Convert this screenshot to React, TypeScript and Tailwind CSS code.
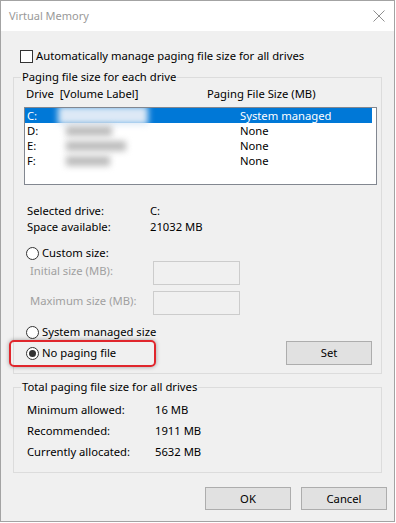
import React from "react";

function Radio({ checked }: { checked?: boolean }) {
  return (
    <span className="w-[13px] h-[13px] rounded-full border border-[#333333] bg-white flex items-center justify-center shrink-0">
      {checked && <span className="w-[7px] h-[7px] rounded-full bg-[#333333]" />}
    </span>
  );
}

function Btn({ label, h }: { label: string; h: string }) {
  return (
    <div className={`w-[86px] ${h} bg-[#e1e1e1] border border-[#adadad] flex items-center justify-center text-black`}>
      {label}
    </div>
  );
}

const rows = [
  { d: "C:", v: "System managed", sel: true, blob: "w-[90px]" },
  { d: "D:", v: "None", sel: false, blob: "w-[46px]" },
  { d: "E:", v: "None", sel: false, blob: "w-[60px]" },
  { d: "F:", v: "None", sel: false, blob: "w-[44px]" },
];

export default function App() {
  return (
    <div className="w-[396px] h-[523px] bg-white font-['Noto_Sans',sans-serif] text-[11.25px] leading-[16px] text-black">
      <div className="w-[395px] h-[522px] border border-[#a3a3a3] bg-[#f0f0f0] flex flex-col">
        {/* Title bar */}
        <div className="h-[30px] bg-white flex items-center justify-between shrink-0">
          <span className="pl-[8px] text-[#999999] text-[11px]">Virtual Memory</span>
          <svg width="12" height="12" viewBox="0 0 12 12" className="mr-[9px]">
            <line x1="0.5" y1="0.5" x2="11.5" y2="11.5" stroke="#8f8f8f" strokeWidth="1" />
            <line x1="11.5" y1="0.5" x2="0.5" y2="11.5" stroke="#8f8f8f" strokeWidth="1" />
          </svg>
        </div>

        {/* Checkbox */}
        <div className="mt-[17px] ml-[19px] h-[16px] flex items-center gap-[3px]">
          <span className="w-[13px] h-[13px] border border-[#333333] bg-white shrink-0" />
          <span>Automatically manage paging file size for all drives</span>
        </div>

        {/* Group 1 */}
        <fieldset className="mt-[5px] ml-[12px] w-[369px] border border-[#dcdcdc] pb-[8px]">
          <legend className="ml-[7px] px-[1px] leading-[16px]">Paging file size for each drive</legend>
          <div className="mt-[1px] h-[16px] flex">
            <span className="ml-[12px] w-[181px] whitespace-pre">Drive  [Volume Label]</span>
            <span>Paging File Size (MB)</span>
          </div>
          <div className="mt-[5px] ml-[10px] w-[353px] h-[78px] border border-[#828790] bg-white overflow-hidden">
            {rows.map((r) => (
              <div
                key={r.d}
                className={`w-[347px] h-[15px] flex items-center ${r.sel ? "bg-[#0078d7] text-white" : ""}`}
              >
                <span className="w-[33px] pl-[2px] shrink-0">{r.d}</span>
                <span className="w-[182px] shrink-0 flex items-center">
                  {r.sel ? (
                    <span className="w-[90px] h-[19px] bg-[#dde9f6] blur-[3px]" />
                  ) : (
                    <span className={`ml-[8px] ${r.blob} h-[10px] bg-[#bdbdbd] blur-[3px]`} />
                  )}
                </span>
                <span>{r.v}</span>
              </div>
            ))}
          </div>

          <div className="mt-[18px] pl-[13px] h-[16px] flex">
            <span className="w-[123px]">Selected drive:</span>
            <span>C:</span>
          </div>
          <div className="pl-[13px] h-[16px] flex">
            <span className="w-[123px]">Space available:</span>
            <span>21032 MB</span>
          </div>

          <div className="mt-[10px] ml-[12px] h-[16px] flex items-center gap-[3px]">
            <Radio />
            <span>Custom size:</span>
          </div>
          <div className="h-[24px] flex items-start">
            <span className="w-[139px] pl-[16px] pt-[2px] text-[#a0a0a0]">Initial size (MB):</span>
            <span className="w-[87px] h-[24px] border border-[#cccccc] bg-[#f0f0f0]" />
          </div>
          <div className="mt-[6px] h-[24px] flex items-start">
            <span className="w-[139px] pl-[16px] pt-[2px] text-[#a0a0a0]">Maximum size (MB):</span>
            <span className="w-[87px] h-[24px] border border-[#cccccc] bg-[#f0f0f0]" />
          </div>

          <div className="mt-[9px] ml-[12px] h-[16px] flex items-center gap-[3px]">
            <Radio />
            <span>System managed size</span>
          </div>
          <div className="mt-[1px] h-[24px] flex items-center justify-between">
            <div className="relative ml-[12px] h-[16px] flex items-center gap-[3px]">
              <Radio checked />
              <span>No paging file</span>
              <div className="absolute -left-[17px] -top-[5px] w-[147px] h-[27px] border-2 border-[#e0262c] rounded-[5px] shadow-[0_0_4px_rgba(0,0,0,0.35)]" />
            </div>
            <div className="mr-[9px]">
              <Btn label="Set" h="h-[24px]" />
            </div>
          </div>
        </fieldset>

        {/* Group 2 */}
        <fieldset className="mt-[5px] ml-[12px] w-[369px] border border-[#dcdcdc] pb-[12px]">
          <legend className="ml-[7px] px-[1px] leading-[16px]">Total paging file size for all drives</legend>
          <div className="mt-[7px] pl-[13px] h-[16px] flex">
            <span className="w-[128px]">Minimum allowed:</span>
            <span>16 MB</span>
          </div>
          <div className="mt-[5px] pl-[13px] h-[16px] flex">
            <span className="w-[128px]">Recommended:</span>
            <span>1911 MB</span>
          </div>
          <div className="mt-[5px] pl-[13px] h-[16px] flex">
            <span className="w-[128px]">Currently allocated:</span>
            <span>5632 MB</span>
          </div>
        </fieldset>

        {/* Buttons */}
        <div className="mt-[14px] pr-[7px] flex justify-end gap-[10px]">
          <Btn label="OK" h="h-[23px]" />
          <Btn label="Cancel" h="h-[23px]" />
        </div>
      </div>
    </div>
  );
}
